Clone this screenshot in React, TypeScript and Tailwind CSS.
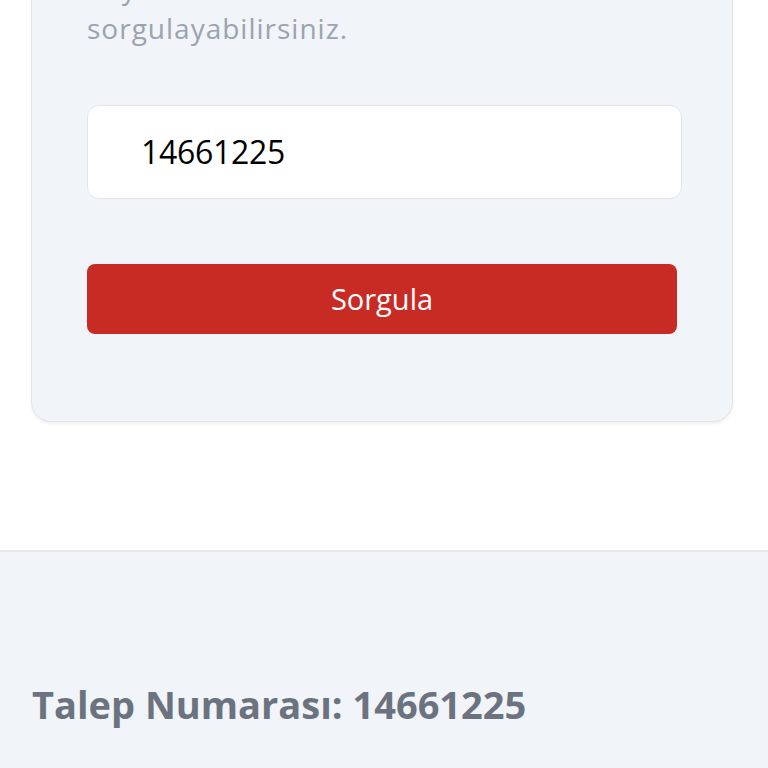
import React from 'react';

export default function App() {
  return (
    <div className="min-h-[768px] bg-white overflow-hidden" style={{ fontFamily: '"Open Sans", "Noto Sans", sans-serif' }}>
      <div className="px-[31px] pr-[35px] -mt-[88px]">
        {/* query card */}
        <section className="bg-[#f1f4f9] rounded-[20px] border-[1.5px] border-[#e1e5eb] shadow-[0_2px_3px_rgba(0,0,0,0.06)] px-[55px] pt-[55px] pb-[87px]">
          <p className="text-[28px] leading-[40px] text-[#9ca3af] tracking-[1px]">
            Kayıt numaranız ile talebinizi
            <br />
            sorgulayabilirsiniz.
          </p>

          <div className="mt-[57px] h-[94px] w-[595px] bg-white rounded-xl border border-[#e2e6ec] flex items-center pl-[53px]">
            <span className="text-[32px] text-black tracking-[-0.3px]">14661225</span>
          </div>

          <button className="mt-[65px] h-[70px] w-full bg-[#c82b23] rounded-lg text-white text-[29px]">
            Sorgula
          </button>
        </section>
      </div>

      <div className="h-[128px]" />

      {/* result */}
      <section className="border-t-2 border-[#e5e7eb] bg-[#f1f4f9] px-[32px] pt-[128px] pb-10">
        <h2 className="text-[38px] font-bold text-[#6b7280] leading-[48px]">Talep Numarası: 14661225</h2>
      </section>
    </div>
  );
}
